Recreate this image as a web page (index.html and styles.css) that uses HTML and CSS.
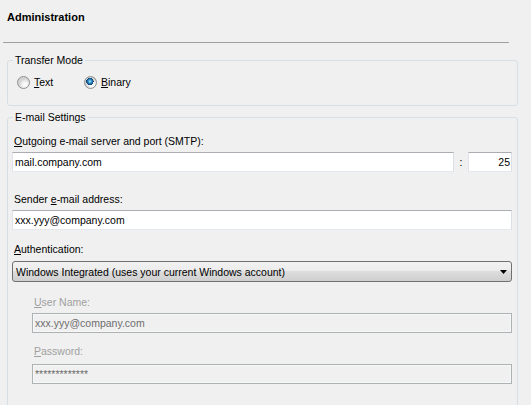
FILE: index.html
```html
<!DOCTYPE html>
<html>
<head>
<meta charset="utf-8">
<link rel="stylesheet" href="styles.css">
</head>
<body>
<div class="page">
  <div class="title">Administration</div>
  <div class="separator"></div>

  <fieldset class="group group-transfer">
    <legend>Transfer Mode</legend>
    <div class="radio-row">
      <label class="radio radio-text"><span class="radio-dot"></span><span class="radio-label"><u>T</u>ext</span></label>
      <label class="radio checked"><span class="radio-dot"></span><span class="radio-label"><u>B</u>inary</span></label>
    </div>
  </fieldset>

  <fieldset class="group group-email">
    <legend>E-mail Settings</legend>
    <div class="email-body">
      <div class="label lbl-smtp"><u>O</u>utgoing e-mail server and port (SMTP):</div>
      <div class="smtp-row">
        <input class="textbox smtp-host" type="text" value="mail.company.com">
        <span class="colon">:</span>
        <input class="textbox smtp-port" type="text" value="25">
      </div>

      <div class="label lbl-sender">Sender <u>e</u>-mail address:</div>
      <input class="textbox sender" type="text" value="xxx.yyy@company.com">

      <div class="label lbl-auth"><u>A</u>uthentication:</div>
      <div class="combo">
        <span class="combo-text">Windows Integrated (uses your current Windows account)</span>
        <svg class="combo-arrow" width="7" height="4" viewBox="0 0 7 4"><polygon points="0,0 7,0 3.5,4" fill="#000"/></svg>
      </div>

      <div class="creds">
        <div class="label disabled lbl-user"><u>U</u>ser Name:</div>
        <input class="textbox off user" type="text" value="xxx.yyy@company.com" disabled>
        <div class="label disabled lbl-pass"><u>P</u>assword:</div>
        <input class="textbox off pass" type="text" value="*************" disabled>
      </div>
    </div>
  </fieldset>
</div>
</body>
</html>
```
FILE: styles.css
```css
html, body {
  margin: 0;
  padding: 0;
  overflow: hidden;
  background: #f0f0f0;
}

.page {
  font-family: "Liberation Sans", Arial, sans-serif;
  font-size: 10.5px;
  color: #000;
  height: 405px;
}

.title {
  font-weight: bold;
  font-size: 11px;
  line-height: 13px;
  padding: 11px 0 0 7px;
}

.separator {
  margin: 18px 22px 0 3px;
  border-top: 1px solid #a0a0a0;
}

.group {
  margin: 0 13px 0 7px;
  padding: 0;
  border: 1px solid #d5dfe5;
  border-radius: 3px;
  min-width: 0;
}

.group legend {
  margin-left: 5px;
  padding: 0 2px;
  line-height: 13px;
}

.group-transfer {
  margin-top: 11px;
}

.radio-row {
  display: flex;
  align-items: center;
  height: 16px;
  padding: 7px 0 15px 9px;
}

.radio {
  display: flex;
  align-items: center;
  gap: 4px;
}

.radio-text {
  width: 67px;
}

.radio-dot {
  width: 13px;
  height: 13px;
  box-sizing: border-box;
  border-radius: 50%;
  border: 1px solid #8e8f8f;
  background: radial-gradient(circle at 65% 70%, #ffffff 0, #f2f2f2 3px, #d2d2d2 6px);
}

.radio.checked .radio-dot {
  background:
    radial-gradient(circle at 45% 40%, #b8ecff 0, #3b9ad6 1.5px, #16588c 3px, #0d3f6a 3.6px, rgba(0,0,0,0) 3.7px),
    radial-gradient(circle at 65% 70%, #ffffff 0, #f2f2f2 3px, #d2d2d2 6px);
}

.group-email {
  margin-top: 5px;
}

.email-body {
  display: flex;
  flex-direction: column;
  padding: 11px 5px 40px 4px;
}

.label {
  line-height: 13px;
  margin-left: 2px;
}

.label.disabled {
  color: #a0a0a0;
}

.textbox {
  box-sizing: border-box;
  height: 20px;
  margin: 0;
  padding: 0 1px 0 2px;
  font: inherit;
  color: #000;
  background: #fff;
  border: 1px solid;
  border-color: #abadb3 #dbdfe6 #e3e9ef #e2e3ea;
  border-radius: 0;
  outline: none;
}

.smtp-row {
  display: flex;
  margin-top: 4px;
}

.smtp-host {
  flex: 1;
  min-width: 0;
}

.colon {
  width: 14px;
  text-align: center;
  line-height: 20px;
}

.smtp-port {
  width: 44px;
  text-align: right;
}

.lbl-sender { margin-top: 21px; }
.sender { margin-top: 4px; }
.lbl-auth { margin-top: 13px; }

.combo {
  margin-top: 5px;
  height: 21px;
  box-sizing: border-box;
  border: 1px solid #707070;
  border-radius: 3px;
  background: linear-gradient(#f2f2f2 0%, #ebebeb 50%, #dddddd 50%, #cfcfcf 100%);
  display: flex;
  align-items: center;
  justify-content: space-between;
  padding: 0 4px 0 3px;
}

.combo-arrow {
  display: block;
}

.creds {
  display: flex;
  flex-direction: column;
  margin-left: 20px;
}

.lbl-user { margin-top: 14px; }
.user { margin-top: 4px; }
.lbl-pass { margin-top: 12px; }
.pass { margin-top: 6px; }

.textbox.off {
  background: #f0f0f0;
  color: #6d6d6d;
  -webkit-text-fill-color: #6d6d6d;
  border-color: #adb2b5;
  box-shadow: inset 0 0 0 1px #f7f7f7;
}
```
